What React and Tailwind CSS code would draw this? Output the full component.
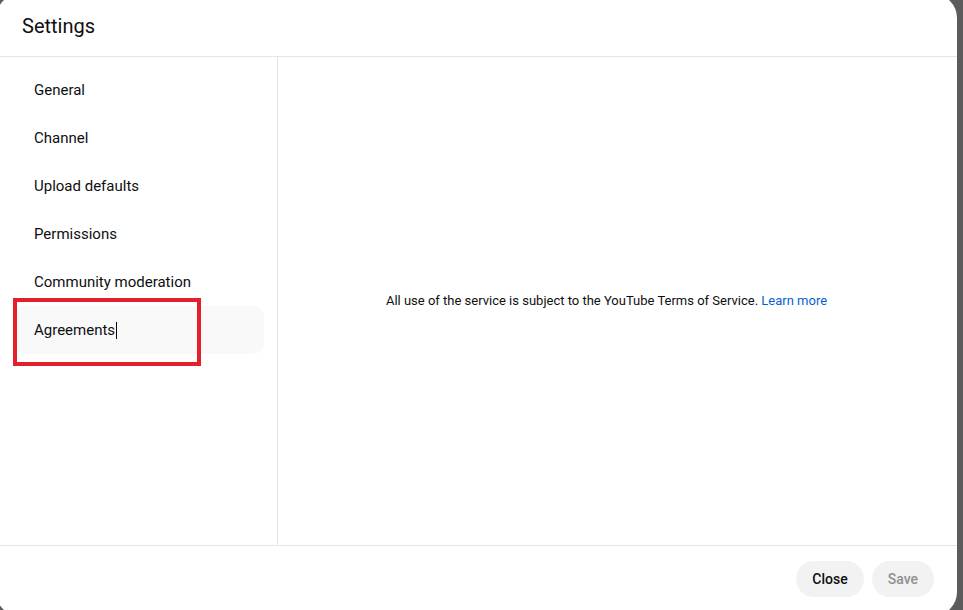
import React from 'react'

const navItems = ['General', 'Channel', 'Upload defaults', 'Permissions', 'Community moderation', 'Agreements']

export default function App() {
  const active = 'Agreements'

  return (
    <div className="h-screen w-full overflow-hidden bg-[#5c5c5c] font-['Roboto','Liberation_Sans',sans-serif] text-[#0f0f0f]">
      <div className="relative -ml-1 -mt-1.5 flex h-[622px] w-[961px] flex-col rounded-[24px] bg-white">
        {/* Header */}
        <div className="h-[63px] shrink-0 border-b border-[#e5e5e5] pl-[26px] pt-[18px]">
          <h1 className="text-[20px] leading-[28px] font-normal">Settings</h1>
        </div>

        {/* Body */}
        <div className="flex min-h-0 flex-1">
          <nav className="w-[282px] shrink-0 border-r border-[#e5e5e5] pl-[18px] pr-[13px] pt-[9px]">
            {navItems.map((item) => (
              <div
                key={item}
                className={`flex h-12 items-center rounded-[10px] pl-[20px] pt-px text-[15px] ${
                  item === active ? 'bg-[#f9f9f9]' : ''
                }`}
              >
                <span>{item}</span>
                {item === active && <span className="ml-px inline-block h-[17px] w-px bg-black" />}
              </div>
            ))}
          </nav>

          <div className="flex flex-1 items-center justify-center pr-[22px]">
            <p className="text-[13px] text-[#0f0f0f]">
              All use of the service is subject to the YouTube Terms of Service.{' '}
              <a href="#" className="text-[#065fd4]">Learn more</a>
            </p>
          </div>
        </div>

        {/* Footer */}
        <div className="flex h-[71px] shrink-0 items-start justify-end gap-2 border-t border-[#e5e5e5] pr-[23px] pt-[15px]">
          <button className="h-9 rounded-full bg-[#f2f2f2] px-4 text-[14px] font-medium text-[#0f0f0f]">Close</button>
          <button className="h-9 rounded-full bg-[#f2f2f2] px-4 text-[14px] font-medium text-[#909090]">Save</button>
        </div>

        {/* Highlight annotation */}
        <div className="pointer-events-none absolute left-[17px] top-[304px] h-[68px] w-[188px] border-4 border-[#e3202b]" />
      </div>
    </div>
  )
}
